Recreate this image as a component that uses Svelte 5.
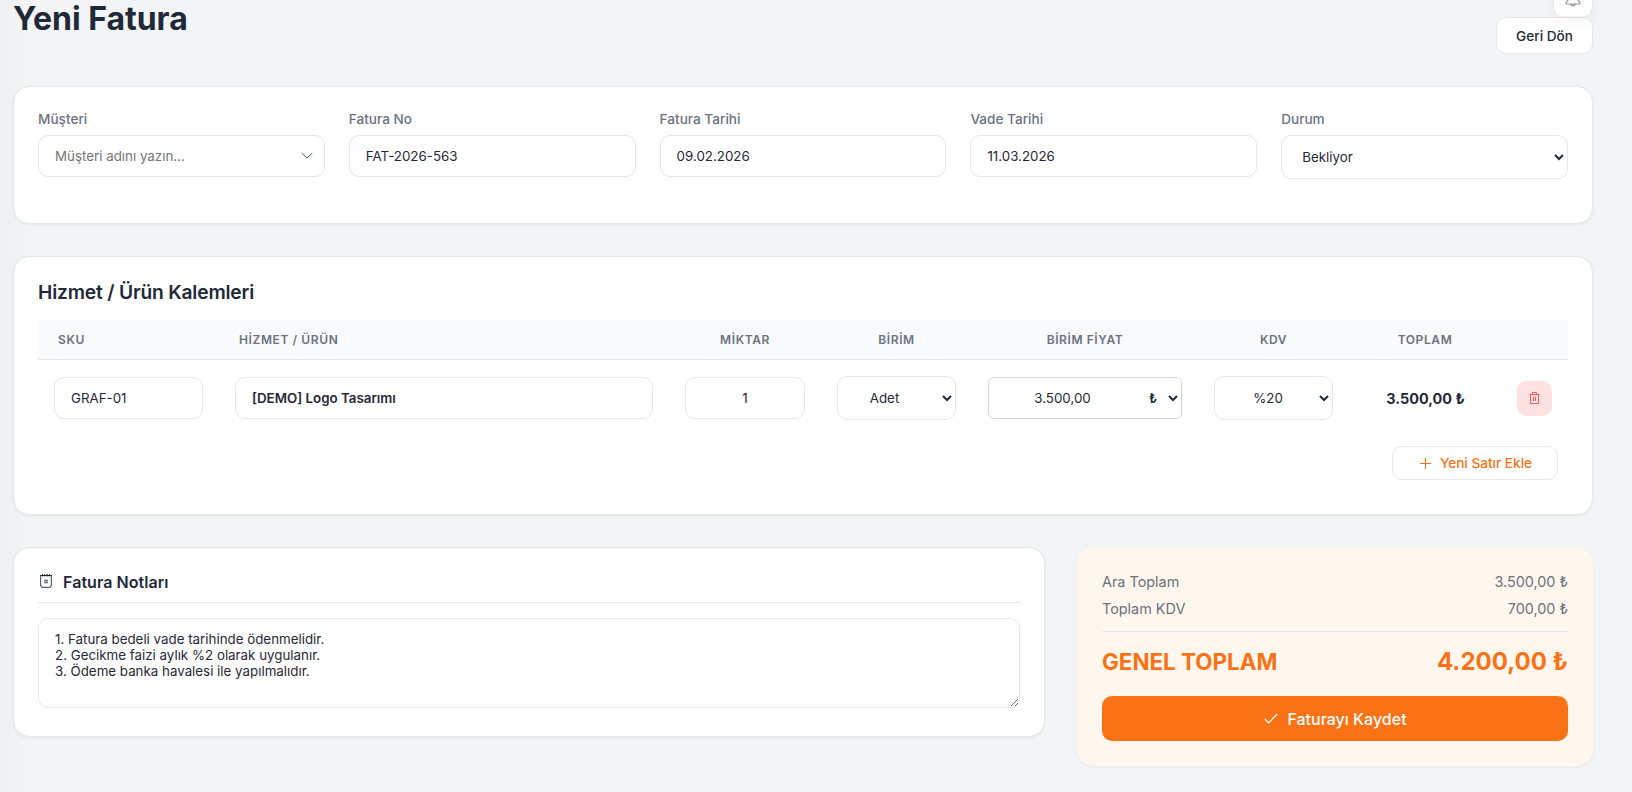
<script>
  const columns = [
    { label: 'SKU', start: true },
    { label: 'HİZMET / ÜRÜN', start: true },
    { label: 'MİKTAR' },
    { label: 'BİRİM' },
    { label: 'BİRİM FİYAT' },
    { label: 'KDV' },
    { label: 'TOPLAM' },
    { label: '' }
  ];
  let notes = $state(
    '1. Fatura bedeli vade tarihinde ödenmelidir.\n2. Gecikme faizi aylık %2 olarak uygulanır.\n3. Ödeme banka havalesi ile yapılmalıdır.'
  );
</script>

<div class="page">
  <header class="top">
    <h1>Yeni Fatura</h1>
    <button class="back">Geri Dön</button>
    <div class="bell">
      <svg width="16" height="18" viewBox="0 0 16 18" fill="none" stroke="currentColor" stroke-width="1.2">
        <path d="M2.8 12V7a5.2 5.2 0 0 1 10.4 0v5M2.8 11.6L1.2 13v2h13.6v-2l-1.6-1.4M5.6 15.2c.4 2.1 4.4 2.1 4.8 0" />
      </svg>
    </div>
  </header>

  <section class="card details">
    <div class="field">
      <span class="label">Müşteri</span>
      <div class="combo">
        <input class="control" placeholder="Müşteri adını yazın..." />
        <svg width="12" height="8" viewBox="0 0 12 8" fill="none" stroke="currentColor"><path d="M.8 1l5.2 5.2L11.2 1" /></svg>
      </div>
    </div>
    <div class="field"><span class="label">Fatura No</span><input class="control" value="FAT-2026-563" /></div>
    <div class="field"><span class="label">Fatura Tarihi</span><input class="control" value="09.02.2026" /></div>
    <div class="field"><span class="label">Vade Tarihi</span><input class="control" value="11.03.2026" /></div>
    <div class="field">
      <span class="label">Durum</span>
      <select class="control"><option>Bekliyor</option></select>
    </div>
  </section>

  <section class="card items">
    <h2>Hizmet / Ürün Kalemleri</h2>
    <div class="grid head">
      {#each columns as c}
        <div class:start={c.start}>{c.label}</div>
      {/each}
    </div>
    <div class="grid row">
      <div><input class="control" value="GRAF-01" /></div>
      <div><input class="control strong" value="[DEMO] Logo Tasarımı" /></div>
      <div><input class="control center" value="1" /></div>
      <div><select class="control center unit"><option>Adet</option></select></div>
      <div>
        <div class="price">
          <input value="3.500,00" />
          <select><option>₺</option></select>
        </div>
      </div>
      <div><select class="control center vat"><option>%20</option></select></div>
      <div class="total">3.500,00 ₺</div>
      <div>
        <button class="remove" aria-label="Sil">
          <svg width="11" height="12" viewBox="0 0 11 12" fill="none" stroke="currentColor">
            <path d="M.5 2.5h10M3.5 2.5v-2h4v2M1.5 2.5v9h8v-9M4.5 4.5v4.5M6.5 4.5v4.5" />
          </svg>
        </button>
      </div>
    </div>
    <button class="add">
      <svg width="11" height="11" viewBox="0 0 11 11" fill="none" stroke="currentColor"><path d="M5.5 0v11M0 5.5h11" /></svg>
      <span>Yeni Satır Ekle</span>
    </button>
  </section>

  <div class="bottom">
    <section class="card notes">
      <h3>
        <svg width="12" height="14" viewBox="0 0 12 14" fill="none" stroke="currentColor">
          <path d="M.6 2v9.6l1.4 1.8h8l1.4-1.8V2" stroke="#5b6470" stroke-width="1.2" />
          <path d="M0 1.5h12M2.5 0v2.5M4.8 0v2.5M7.2 0v2.5M9.5 0v2.5" />
          <path d="M4 6.5h4M4 8.5h4" stroke="#6b7280" stroke-width="1.3" />
        </svg>
        Fatura Notları
      </h3>
      <textarea bind:value={notes}></textarea>
    </section>

    <section class="card summary">
      <div class="line"><span>Ara Toplam</span><span>3.500,00 ₺</span></div>
      <div class="line"><span>Toplam KDV</span><span>700,00 ₺</span></div>
      <div class="grand"><span>GENEL TOPLAM</span><span class="amount">4.200,00 ₺</span></div>
      <button class="save">
        <svg width="14" height="11" viewBox="0 0 14 11" fill="none" stroke="currentColor" stroke-width="1.2"><path d="M.7 5.8l4 4L13.2 1" /></svg>
        <span>Faturayı Kaydet</span>
      </button>
    </section>
  </div>
  <div class="edge"></div>
</div>

<style>
  :global(body) { background: #f3f4f6; overflow: hidden; }
  .page, .page * { box-sizing: border-box; }
  .page {
    position: relative;
    height: 792px;
    padding: 0 39px 0 13px;
    overflow: hidden;
    font-family: Inter, 'Liberation Sans', sans-serif;
    font-size: 13.6px;
    color: #1f2937;
  }
  input, select, textarea, button { font-family: inherit; color: inherit; margin: 0; }
  h1, h2, h3 { margin: 0; }

  .edge {
    position: absolute;
    top: 0;
    left: 0;
    width: 30px;
    height: 100%;
    background: linear-gradient(90deg, rgba(0, 0, 0, .02), rgba(0, 0, 0, .006) 50%, transparent);
    pointer-events: none;
  }

  .top {
    position: relative;
    display: flex;
    justify-content: space-between;
    align-items: flex-start;
    height: 86px;
  }
  h1 { font-size: 32px; font-weight: 700; line-height: 38px; }
  .back {
    width: 97px;
    height: 37px;
    margin-top: 17px;
    padding: 0;
    border: 1px solid #e5e7eb;
    border-radius: 10px;
    background: #fff;
    font-size: 13.6px;
    font-weight: 500;
  }
  .bell {
    position: absolute;
    right: 0;
    top: -23px;
    width: 40px;
    height: 40px;
    display: flex;
    justify-content: center;
    align-items: center;
    padding-top: 2px;
    border: 1px solid #e5e7eb;
    border-bottom-color: #f0f1f4;
    border-radius: 10px;
    background: #fff;
    color: #9096a2;
    box-shadow: 0 4px 12px rgba(0, 0, 0, .05);
  }

  .card {
    border: 1px solid #e5e7eb;
    border-radius: 16px;
    background: #fff;
    padding: 24px;
    box-shadow: 0 1px 3px rgba(0, 0, 0, .06);
  }
  .details {
    display: grid;
    grid-template-columns: repeat(5, 1fr);
    gap: 24px;
    height: 138px;
    margin-bottom: 32px;
  }
  .field { display: flex; flex-direction: column; min-width: 0; }
  .label { height: 24px; line-height: 16px; font-size: 13.6px; font-weight: 500; color: #6b7280; }
  .control {
    display: block;
    width: 100%;
    height: 42px;
    padding: 0 16px;
    border: 1px solid #e5e7eb;
    border-radius: 10px;
    background: #fff;
    font-size: 13.333px;
  }
  select.control { height: 44px; }
  .control::placeholder { color: #757575; opacity: 1; }
  .combo { position: relative; }
  .combo svg { position: absolute; right: 12px; top: 17px; color: #4b5563; }

  .items { height: 259px; margin-bottom: 32px; }
  h2 { height: 39px; font-size: 19.2px; font-weight: 600; line-height: 23px; letter-spacing: -.17px; }
  .grid { display: grid; grid-template-columns: 181px 450px 152px 151px 226px 151px 152px 67px; }
  .head {
    height: 40px;
    align-items: center;
    border-bottom: 1px solid #e5e7eb;
    background: #f9fafb;
    font-size: 12px;
    font-weight: 600;
    letter-spacing: .6px;
    text-align: center;
    color: #6b7280;
  }
  .head .start { text-align: left; padding-left: 20px; }
  .row { height: 76px; align-items: center; }
  .row > div { padding: 0 16px; }
  .strong { font-weight: 600; }
  .center { text-align: center; }
  .unit { padding: 0 20px 0 8px; }
  .vat { padding: 0 15px 0 16px; }
  .price {
    display: flex;
    height: 42px;
    border: 1px solid #d1d5db;
    border-radius: 6px;
    overflow: hidden;
  }
  .price input {
    width: 147px;
    padding: 0;
    border: 0;
    background: transparent;
    font-size: 13.333px;
    text-align: center;
  }
  .price select {
    width: 45px;
    padding: 0 0 0 9px;
    border: 0;
    background: #fff;
    font-size: 12.8px;
    font-weight: 600;
  }
  .row .total { padding: 0 0 0 1px; text-align: center; font-size: 14.4px; font-weight: 700; }
  .remove {
    display: flex;
    align-items: center;
    justify-content: center;
    width: 35px;
    height: 35px;
    padding: 0 0 1px;
    border: 0;
    border-radius: 10px;
    background: #fee2e2;
    color: #ef4444;
  }
  .remove svg { opacity: .85; }
  .add {
    display: flex;
    align-items: center;
    justify-content: center;
    gap: 9px;
    width: 166px;
    height: 34px;
    margin: 10px 10px 0 auto;
    padding: 0 0 0 2px;
    border: 1px solid #e5e7eb;
    border-radius: 10px;
    background: #fff;
    color: #f97316;
    font-size: 13.6px;
    font-weight: 500;
  }

  .bottom { display: flex; align-items: flex-start; gap: 32px; }
  .notes { width: 1032px; height: 190px; }
  h3 {
    display: flex;
    gap: 11px;
    height: 31px;
    padding-left: 2px;
    border-bottom: 1px solid #e5e7eb;
    font-size: 16px;
    font-weight: 600;
    line-height: 20px;
    letter-spacing: .05px;
  }
  h3 svg { margin-top: 2px; }
  textarea {
    display: block;
    width: 100%;
    height: 90px;
    margin-top: 15px;
    padding: 12px 16px;
    border: 1px solid #e5e7eb;
    border-radius: 10px;
    background: #fff;
    font-size: 13.333px;
    line-height: 16px;
    resize: vertical;
    outline: 0;
  }
  .summary { width: 516px; height: 219px; background: #fff7ed; border-color: transparent; }
  .line { display: flex; justify-content: space-between; height: 27px; line-height: 19px; font-size: 14.4px; color: #6b7280; }
  .grand {
    display: flex;
    justify-content: space-between;
    align-items: center;
    height: 65px;
    padding-bottom: 5px;
    margin-top: 5px;
    border-top: 1px solid #e5e7eb;
    font-size: 22.4px;
    font-weight: 700;
    color: #f97316;
  }
  .amount { font-size: 24px; }
  .save {
    display: flex;
    align-items: center;
    justify-content: center;
    gap: 9px;
    width: 100%;
    height: 45px;
    padding: 0 0 0 1px;
    border: 0;
    border-radius: 10px;
    background: #f97316;
    color: #fff;
    font-size: 16px;
    font-weight: 500;
  }
</style>
